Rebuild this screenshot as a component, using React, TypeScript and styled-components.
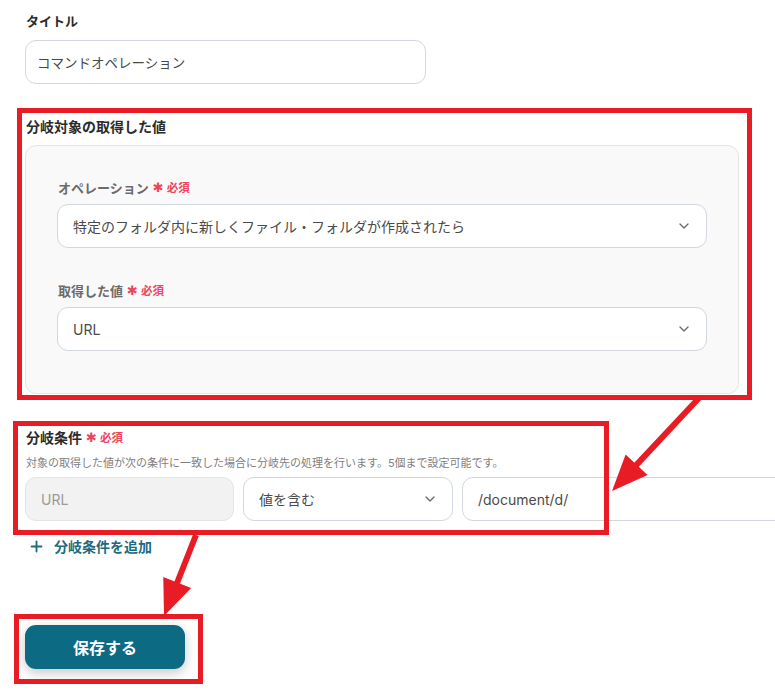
import * as React from 'react';
import styled, { createGlobalStyle } from 'styled-components';
import { ChevronDown, Plus } from 'lucide-react';

const GlobalStyle = createGlobalStyle`
  html, body {
    margin: 0;
    padding: 0;
    background: #ffffff;
  }
  body {
    font-family: Inter, "Noto Sans CJK JP", "Noto Sans", sans-serif;
    color: #333;
  }
`;

const RED = '#e81c24';

const Page = styled.div`
  position: relative;
  width: 775px;
  height: 694px;
  overflow: hidden;
  padding: 12px 0 0 25px;
  box-sizing: border-box;
`;

const Field = styled.div<{ $mt?: number }>`
  display: flex;
  flex-direction: column;
  margin-top: ${(p) => p.$mt ?? 0}px;
`;

const Label = styled.div<{ $muted?: boolean; $size?: number }>`
  display: flex;
  align-items: center;
  gap: 4px;
  font-size: ${(p) => p.$size ?? 13}px;
  font-weight: 700;
  line-height: 18px;
  color: ${(p) => (p.$muted ? '#6b6b6b' : '#2b2b2b')};
  padding-left: 1px;
`;

const Required = styled.span`
  display: inline-flex;
  align-items: center;
  gap: 3px;
  color: #f0445a;
  font-size: 11.5px;
  font-weight: 700;
  &::before {
    content: '✱';
    font-family: "DejaVu Sans", sans-serif;
    font-size: 13px;
    color: #f0445a;
  }
`;

const Box = styled.div<{ $width?: string; $disabled?: boolean; $pad?: number; $size?: number }>`
  box-sizing: border-box;
  display: flex;
  align-items: center;
  justify-content: space-between;
  width: ${(p) => p.$width ?? '100%'};
  height: 44px;
  padding: 0 14px 0 ${(p) => p.$pad ?? 15}px;
  border: 1px solid ${(p) => (p.$disabled ? '#e3e4e6' : '#d3d7de')};
  border-radius: 11px;
  background: ${(p) => (p.$disabled ? '#f2f2f2' : '#ffffff')};
  color: ${(p) => (p.$disabled ? '#9a9a9a' : '#4a4a4a')};
  font-size: ${(p) => p.$size ?? 14}px;
  flex-shrink: 0;
  white-space: nowrap;
`;

const Panel = styled.div`
  box-sizing: border-box;
  width: 714px;
  margin-top: 9px;
  padding: 33px 31px 42px 31px;
  background: #f9f9fa;
  border: 1px solid #e4e5e7;
  border-radius: 11px;
`;

const Description = styled.div`
  margin-top: 7px;
  font-size: 11px;
  color: #808080;
  padding-left: 1px;
`;

const ConditionRow = styled.div`
  display: flex;
  gap: 9px;
  margin-top: 7px;
`;

const AddLink = styled.div`
  display: flex;
  align-items: center;
  gap: 9px;
  margin-top: 15px;
  padding-left: 3px;
  color: #1d6b80;
  font-size: 14px;
  font-weight: 700;
`;

const SaveButton = styled.button`
  margin-top: 69px;
  width: 160px;
  height: 44px;
  border: none;
  border-radius: 11px;
  background: #0c6a82;
  color: #ffffff;
  font-family: inherit;
  font-size: 16px;
  font-weight: 700;
  box-shadow: 0 4px 12px rgba(0, 0, 0, 0.22);
`;

const Highlight = styled.div<{ $x: number; $y: number; $w: number; $h: number }>`
  position: absolute;
  left: ${(p) => p.$x}px;
  top: ${(p) => p.$y}px;
  width: ${(p) => p.$w}px;
  height: ${(p) => p.$h}px;
  box-sizing: border-box;
  border: 5px solid ${RED};
  pointer-events: none;
`;

const ArrowLayer = styled.svg`
  position: absolute;
  left: 0;
  top: 0;
  pointer-events: none;
`;

function Arrow({ x1, y1, x2, y2 }: { x1: number; y1: number; x2: number; y2: number }) {
  const dx = x2 - x1;
  const dy = y2 - y1;
  const len = Math.hypot(dx, dy);
  const ux = dx / len;
  const uy = dy / len;
  const head = 36;
  const half = 15;
  const bx = x2 - ux * head;
  const by = y2 - uy * head;
  const p1 = `${bx - uy * half},${by + ux * half}`;
  const p2 = `${bx + uy * half},${by - ux * half}`;
  return (
    <g>
      <line x1={x1} y1={y1} x2={bx + ux * 4} y2={by + uy * 4} stroke={RED} strokeWidth={6} />
      <polygon points={`${x2},${y2} ${p1} ${p2}`} fill={RED} />
    </g>
  );
}

export default function App(): JSX.Element {
  return (
    <>
      <GlobalStyle />
      <Page>
        <Field>
          <Label>タイトル</Label>
          <Box $width="401px" $pad={11} $size={13.5} style={{ marginTop: 10 }}>
            コマンドオペレーション
          </Box>
        </Field>

        <Field $mt={34}>
          <Label $size={14}>分岐対象の取得した値</Label>
          <Panel>
            <Field>
              <Label $muted>
                オペレーション<Required>必須</Required>
              </Label>
              <Box style={{ marginTop: 7 }}>
                特定のフォルダ内に新しくファイル・フォルダが作成されたら
                <ChevronDown size={16} color="#6b6b6b" strokeWidth={2} />
              </Box>
            </Field>
            <Field $mt={34}>
              <Label $muted>
                取得した値<Required>必須</Required>
              </Label>
              <Box style={{ marginTop: 7 }}>
                URL
                <ChevronDown size={16} color="#6b6b6b" strokeWidth={2} />
              </Box>
            </Field>
          </Panel>
        </Field>

        <Field $mt={35}>
          <Label $size={14}>
            分岐条件<Required>必須</Required>
          </Label>
          <Description>
            対象の取得した値が次の条件に一致した場合に分岐先の処理を行います。5個まで設定可能です。
          </Description>
          <ConditionRow>
            <Box $width="209px" $disabled>
              URL
            </Box>
            <Box $width="210px">
              値を含む
              <ChevronDown size={16} color="#6b6b6b" strokeWidth={2} />
            </Box>
            <Box $width="340px">/document/d/</Box>
          </ConditionRow>
        </Field>

        <AddLink>
          <Plus size={17} strokeWidth={2.6} />
          分岐条件を追加
        </AddLink>

        <SaveButton>保存する</SaveButton>

        <Highlight $x={17} $y={108} $w={735} $h={292} />
        <Highlight $x={13} $y={421} $w={596} $h={114} />
        <Highlight $x={14} $y={614} $w={189} $h={70} />

        <ArrowLayer width={775} height={694}>
          <Arrow x1={699} y1={398} x2={612} y2={491} />
          <Arrow x1={196} y1={535} x2={164} y2={616} />
        </ArrowLayer>
      </Page>
    </>
  );
}
